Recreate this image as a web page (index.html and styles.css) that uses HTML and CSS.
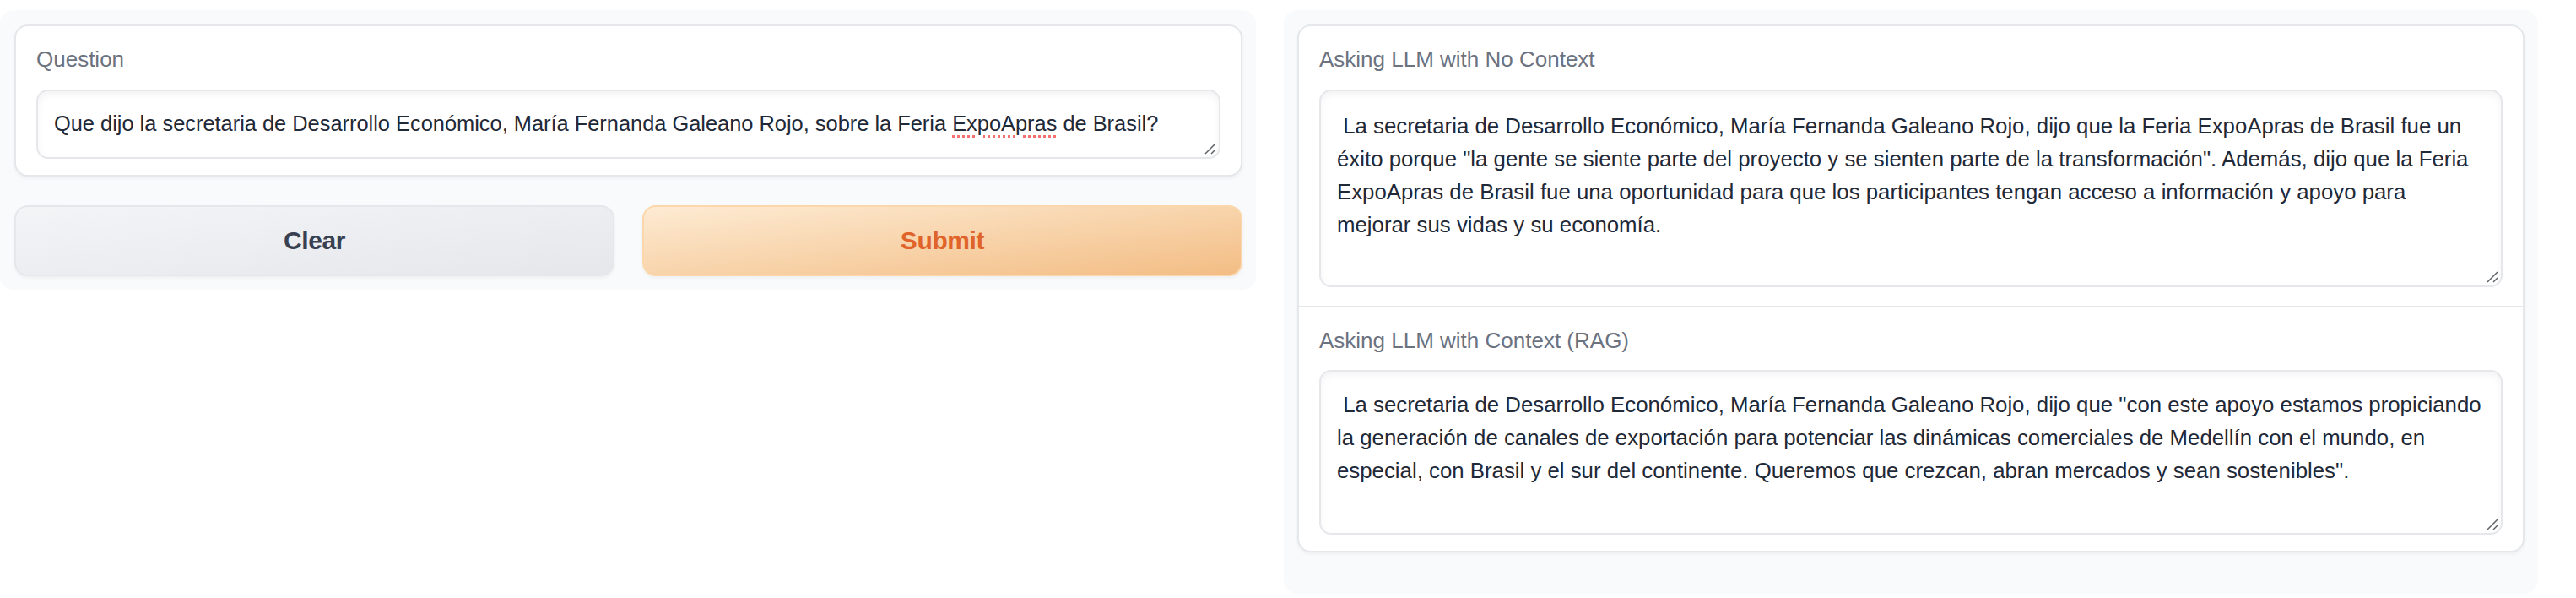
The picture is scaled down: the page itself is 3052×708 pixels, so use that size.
FILE: index.html
```html
<!DOCTYPE html>
<html lang="es">
<head>
<meta charset="utf-8">
<title>RAG demo</title>
<link rel="stylesheet" href="styles.css">
</head>
<body>
<div class="app">
  <div class="panel panel-left">
    <div class="block">
      <div class="label">Question</div>
      <div class="textbox textbox-question">
        <div class="line">Que dijo la secretaria de Desarrollo Económico, María Fernanda Galeano Rojo, sobre la Feria <span class="misspelled">ExpoApras</span> de Brasil?</div>
        <svg class="grip" viewBox="0 0 16 16" width="16" height="16"><path d="M2 14 L14 2 M9 14 L14 9" stroke="#5f6368" stroke-width="1.5" fill="none"/></svg>
      </div>
    </div>
    <div class="buttons">
      <button class="btn btn-secondary">Clear</button>
      <button class="btn btn-primary">Submit</button>
    </div>
  </div>
  <div class="panel panel-right">
    <div class="block block-group">
      <div class="field">
        <div class="label">Asking LLM with No Context</div>
        <div class="textbox textbox-out1">
          <div class="line"> La secretaria de Desarrollo Económico, María Fernanda Galeano Rojo, dijo que la Feria ExpoApras de Brasil fue un</div>
          <div class="line">éxito porque "la gente se siente parte del proyecto y se sienten parte de la transformación". Además, dijo que la Feria</div>
          <div class="line">ExpoApras de Brasil fue una oportunidad para que los participantes tengan acceso a información y apoyo para</div>
          <div class="line">mejorar sus vidas y su economía.</div>
          <svg class="grip" viewBox="0 0 16 16" width="16" height="16"><path d="M2 14 L14 2 M9 14 L14 9" stroke="#5f6368" stroke-width="1.5" fill="none"/></svg>
        </div>
      </div>
      <div class="field field-second">
        <div class="label">Asking LLM with Context (RAG)</div>
        <div class="textbox textbox-out2">
          <div class="line"> La secretaria de Desarrollo Económico, María Fernanda Galeano Rojo, dijo que "con este apoyo estamos propiciando</div>
          <div class="line">la generación de canales de exportación para potenciar las dinámicas comerciales de Medellín con el mundo, en</div>
          <div class="line">especial, con Brasil y el sur del continente. Queremos que crezcan, abran mercados y sean sostenibles".</div>
          <svg class="grip" viewBox="0 0 16 16" width="16" height="16"><path d="M2 14 L14 2 M9 14 L14 9" stroke="#5f6368" stroke-width="1.5" fill="none"/></svg>
        </div>
      </div>
    </div>
  </div>
</div>
</body>
</html>
```

FILE: styles.css
```css
* {
  box-sizing: border-box;
}

html, body {
  margin: 0;
  padding: 0;
  background: #ffffff;
}

body {
  font-family: "Liberation Sans", Arial, sans-serif;
  color: #1f2937;
}

.app {
  width: 3007px;
  display: grid;
  grid-template-columns: 1488px 1486px;
  column-gap: 33px;
  align-items: start;
  padding-top: 12px;
}

.panel {
  min-width: 0;
  background: #f9fafb;
  border-radius: 16px;
}

.panel-left {
  padding: 17px 16px 16px 17px;
}

.panel-right {
  padding: 17px 16px 49px 16px;
}

.block {
  background: #ffffff;
  border: 2px solid #e5e7eb;
  border-radius: 16px;
  box-shadow: 0 2px 4px rgba(0, 0, 0, 0.05);
  padding: 19px 24px 19px 24px;
}

.block-group {
  padding: 0;
}

.field {
  padding: 19px 24px 22px 24px;
}

.field-second {
  border-top: 2px solid #e5e7eb;
  padding: 19px 24px 19px 24px;
}

.label {
  font-size: 26px;
  line-height: 40px;
  height: 40px;
  color: #6b7280;
  margin-bottom: 16px;
}

.field-second .label {
  margin-bottom: 15px;
}

.textbox {
  position: relative;
  background: #ffffff;
  border: 2px solid #e5e7eb;
  border-radius: 14px;
  box-shadow: inset 0 4px 8px rgba(0, 0, 0, 0.05);
  padding: 22px 19px;
  font-size: 25.8px;
  line-height: 39px;
  color: #1f2937;
  overflow: hidden;
}

.textbox-question {
  height: 82px;
  padding-top: 19px;
  font-size: 25.4px;
}

.textbox-out1 {
  height: 234px;
}

.textbox-out2 {
  height: 195px;
  padding-top: 20px;
}

.line {
  white-space: pre;
}

.misspelled {
  text-decoration: underline dotted #f87171;
  text-decoration-thickness: 3px;
  text-underline-offset: 5px;
}

.grip {
  position: absolute;
  right: 2px;
  bottom: 2px;
}

.buttons {
  display: grid;
  grid-template-columns: 1fr 1fr;
  column-gap: 33px;
  margin-top: 34px;
}

.btn {
  height: 84px;
  border-radius: 16px;
  font-family: "Liberation Sans", Arial, sans-serif;
  font-weight: 700;
  font-size: 30px;
  letter-spacing: -0.4px;
  box-shadow: 0 2px 4px rgba(0, 0, 0, 0.05);
  cursor: pointer;
}

.btn-secondary {
  background: linear-gradient(to bottom right, #f3f4f6, #e5e7eb);
  border: 2px solid #e5e7eb;
  color: #374151;
}

.btn-primary {
  background: linear-gradient(to bottom right, #fdebd3, #f3bd84);
  border: 2px solid #fbd7ab;
  color: #e0642a;
}
```
